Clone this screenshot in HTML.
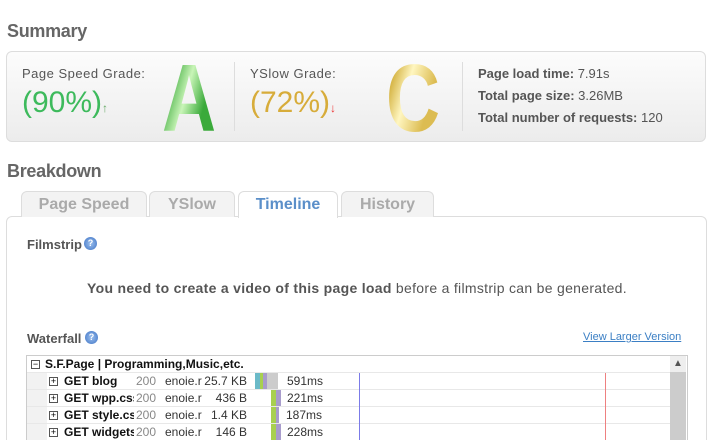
<!DOCTYPE html>
<html style="width:714px;height:440px;overflow:hidden"><head><style>
*{margin:0;padding:0;box-sizing:border-box}
body{width:714px;height:440px;overflow:hidden;background:#fff;font-family:"Liberation Sans",Arial,sans-serif;position:relative;color:#555}
.a{position:absolute;white-space:nowrap}
h2{position:absolute;font-size:18px;font-weight:bold;color:#666;letter-spacing:-0.3px}
.sum{position:absolute;left:6px;top:51px;width:700px;height:91px;border:1px solid #ddd;border-radius:6px;background:linear-gradient(#fcfcfc,#ececec)}
.lbl{font-size:13px;color:#555;letter-spacing:0.5px}
.st{font-size:13px;color:#555}
.tab{position:absolute;top:191px;height:26px;border:1px solid #ddd;border-bottom:none;border-radius:6px 6px 0 0;background:#f3f3f3;color:#aaa;font-weight:bold;font-size:16px;text-align:center;line-height:26px}
.row{position:absolute;left:27px;width:643px;height:17px;border-bottom:1px solid #e8e8e8;font-size:12px;color:#333}
.row span{position:absolute;top:1px;white-space:nowrap}
.pl{position:absolute;left:22px;top:4px;width:9px;height:9px;border:1px solid #555;font-size:9px;line-height:7px;text-align:center;color:#000}
</style></head><body>
<h2 style="left:7px;top:21px">Summary</h2>
<div class="sum"></div>
<div class="a lbl" style="left:22px;top:66px">Page Speed Grade:</div>
<div class="a" style="left:22px;top:86px;font-size:30px;color:#3dba5c">(90%)<span style="font-size:12px;color:#6a6">↑</span></div>
<div class="a" style="left:162px;top:44px;font-size:96px;font-weight:bold;transform:scaleX(0.78);transform-origin:left;background:linear-gradient(110deg,#3aa83a 20%,#c9f5b8 45%,#3aaa3a 70%);-webkit-background-clip:text;background-clip:text;-webkit-text-fill-color:transparent">A</div>
<div class="a" style="left:234px;top:62px;width:1px;height:69px;background:#ddd"></div>
<div class="a lbl" style="left:250px;top:66px">YSlow Grade:</div>
<div class="a" style="left:250px;top:86px;font-size:30px;color:#d7ac3a">(72%)<span style="font-size:12px;color:#e33">↓</span></div>
<div class="a" style="left:386px;top:44px;font-size:96px;font-weight:bold;transform:scaleX(0.78);transform-origin:left;background:linear-gradient(110deg,#d8b84c 20%,#fff6c0 40%,#dcbc52 70%);-webkit-background-clip:text;background-clip:text;-webkit-text-fill-color:transparent">C</div>
<div class="a" style="left:462px;top:62px;width:1px;height:69px;background:#ddd"></div>
<div class="a st" style="left:478px;top:66px"><b>Page load time:</b> 7.91s</div>
<div class="a st" style="left:478px;top:88px"><b>Total page size:</b> 3.26MB</div>
<div class="a st" style="left:478px;top:110px"><b>Total number of requests:</b> 120</div>
<h2 style="left:7px;top:161px">Breakdown</h2>
<div class="a" style="left:6px;top:216px;width:701px;height:240px;border:1px solid #ddd;border-radius:6px 6px 0 0"></div>
<div class="tab" style="left:21px;width:126px">Page Speed</div>
<div class="tab" style="left:149px;width:86px">YSlow</div>
<div class="tab" style="left:238px;width:100px;background:#fff;color:#5b8fc9;height:27px">Timeline</div>
<div class="tab" style="left:341px;width:93px">History</div>
<div class="a" style="left:27px;top:237px;font-size:13px;font-weight:bold;color:#555">Filmstrip</div>
<div class="a" style="left:84px;top:237px;width:13px;height:13px;border-radius:50%;background:radial-gradient(#9cc0ee,#3d72c4);color:#fff;font-size:9px;font-weight:bold;text-align:center;line-height:13px">?</div>
<div class="a" style="left:0;width:714px;text-align:center;top:280px;font-size:14px;color:#555;letter-spacing:0.3px"><b>You need to create a video of this page load</b> before a filmstrip can be generated.</div>
<div class="a" style="left:27px;top:331px;font-size:13px;font-weight:bold;color:#555">Waterfall</div>
<div class="a" style="left:85px;top:331px;width:13px;height:13px;border-radius:50%;background:radial-gradient(#9cc0ee,#3d72c4);color:#fff;font-size:9px;font-weight:bold;text-align:center;line-height:13px">?</div>
<div class="a" style="left:583px;top:331px;font-size:11px;color:#3b7fc4;text-decoration:underline">View Larger Version</div>
<div class="a" style="left:26px;top:355px;width:662px;height:90px;border:1px solid #ccc"></div>
<div class="a" style="left:670px;top:356px;width:16px;height:84px;background:#ccc"></div>
<div class="a" style="left:670px;top:356px;width:16px;height:16px;background:#eee;font-size:10px;text-align:center;line-height:16px;color:#555">▲</div>
<div class="a" style="left:27px;top:373px;width:20px;height:67px;background:#f2f2f2"></div>
<div class="a" style="left:27px;top:356px;width:643px;height:17px;border-bottom:1px solid #e8e8e8"></div>
<div class="pl" style="left:31px;top:360px">−</div>
<div class="a" style="left:45px;top:357px;font-size:12px;font-weight:bold;color:#111">S.F.Page | Programming,Music,etc.</div>
<div class="row" style="top:373px"><div class="pl">+</div><span style="left:37px;font-weight:bold;color:#111">GET blog</span><span style="left:109px;color:#888">200</span><span style="left:138px">enoie.r</span><span style="left:176px;width:44px;text-align:right">25.7 KB</span>
<div class="a" style="left:228px;top:0;width:5px;height:16px;background:#6bbac8"></div><div class="a" style="left:233px;top:0;width:3px;height:16px;background:#a8d050"></div><div class="a" style="left:236px;top:0;width:4px;height:16px;background:#a89ccc"></div><div class="a" style="left:240px;top:0;width:11px;height:16px;background:#ccc"></div><span style="left:260px">591ms</span></div>
<div class="row" style="top:390px"><div class="pl">+</div><span style="left:37px;font-weight:bold;color:#111;width:70px;overflow:hidden">GET wpp.css</span><span style="left:109px;color:#888">200</span><span style="left:138px">enoie.r</span><span style="left:176px;width:44px;text-align:right">436 B</span>
<div class="a" style="left:244px;top:0;width:5px;height:16px;background:#a8d050"></div><div class="a" style="left:249px;top:0;width:5px;height:16px;background:#a89ccc"></div><span style="left:260px">221ms</span></div>
<div class="row" style="top:407px"><div class="pl">+</div><span style="left:37px;font-weight:bold;color:#111;width:70px;overflow:hidden">GET style.css</span><span style="left:109px;color:#888">200</span><span style="left:138px">enoie.r</span><span style="left:176px;width:44px;text-align:right">1.4 KB</span>
<div class="a" style="left:244px;top:0;width:5px;height:16px;background:#a8d050"></div><div class="a" style="left:249px;top:0;width:3px;height:16px;background:#a89ccc"></div><span style="left:259px">187ms</span></div>
<div class="row" style="top:424px"><div class="pl">+</div><span style="left:37px;font-weight:bold;color:#111;width:70px;overflow:hidden">GET widgets</span><span style="left:109px;color:#888">200</span><span style="left:138px">enoie.r</span><span style="left:176px;width:44px;text-align:right">146 B</span>
<div class="a" style="left:244px;top:0;width:5px;height:16px;background:#a8d050"></div><div class="a" style="left:249px;top:0;width:5px;height:16px;background:#a89ccc"></div><span style="left:260px">228ms</span></div>
<div class="a" style="left:359px;top:373px;width:1px;height:67px;background:#7b7be8"></div>
<div class="a" style="left:605px;top:373px;width:1px;height:67px;background:#ee8080"></div>
</body></html>
